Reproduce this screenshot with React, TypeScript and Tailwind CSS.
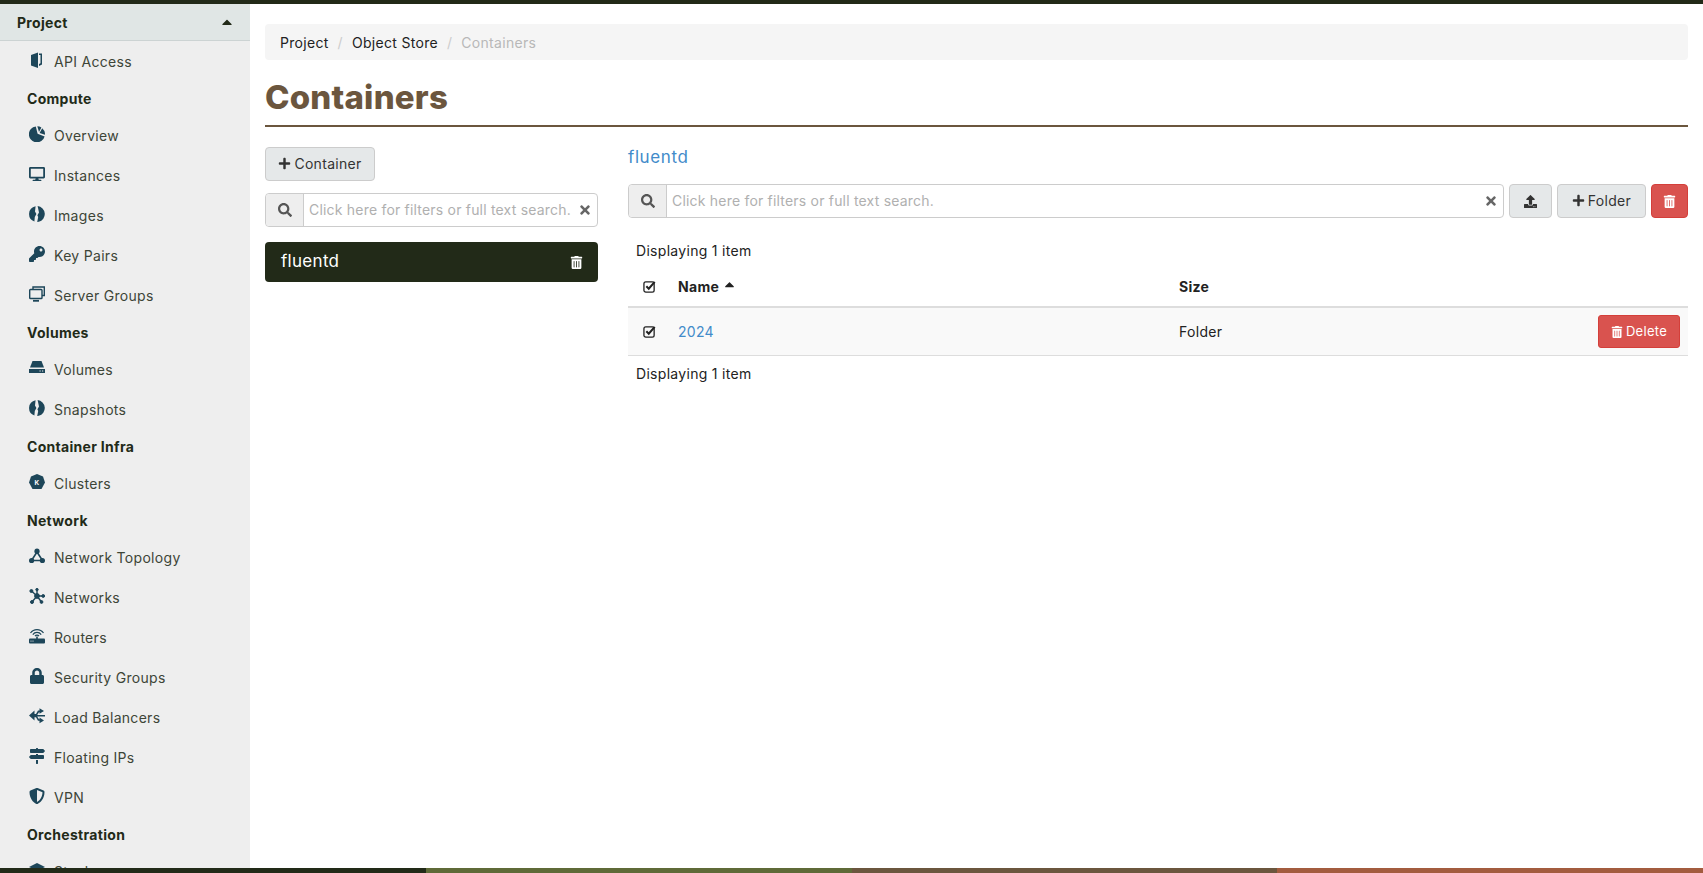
import type { ReactNode } from "react";
import {
  FaCaretUp,
  FaDesktop,
  FaKey,
  FaLock,
  FaMapSigns,
  FaPlus,
  FaSearch,
  FaShieldAlt,
  FaTimes,
  FaTrashAlt,
  FaUpload,
} from "react-icons/fa";

const ApiIcon = () => (
  <svg viewBox="0 0 16 16" className="w-4 h-4" fill="currentColor">
    <path d="M2 3 L9 0.5 V16 L2 13.5 Z" />
    <path d="M10 1.5 H13 V12.5 L10 14 V12 L11.5 11.2 V3 H10 Z" />
  </svg>
);

const PieIcon = () => (
  <svg viewBox="0 0 16 16" className="w-4 h-4" fill="currentColor">
    <path d="M6.8 0.4 L8.6 7.8 L15.6 10.4 A8 8 0 1 1 6.8 0.4 Z" />
    <path d="M8.3 0.2 A8 8 0 0 1 12.4 1.5 L10 6 Z" />
    <path d="M13.2 2.2 A8 8 0 0 1 16 8.8 L10.6 7 Z" />
  </svg>
);

const DiscIcon = () => (
  <svg viewBox="0 0 16 16" className="w-4 h-4" fill="currentColor">
    <path d="M6.6 0.2 L6 5.5 L7.4 8 L5.8 11 L5.4 15.6 A8 8 0 0 1 6.6 0.2 Z" />
    <path d="M8.6 0.1 A8 8 0 0 1 9.8 15.8 L8.2 15.9 L9.2 11 L8.4 9.2 L10 6.4 Z" />
  </svg>
);

const ServerGroupIcon = () => (
  <svg viewBox="0 0 16 16" className="w-4 h-4" fill="none" stroke="currentColor" strokeWidth="1.4">
    <path d="M4 3.5 V1 H15.3 V9.5 H13" />
    <rect x="0.7" y="3.5" width="12.3" height="9" rx="0.8" />
    <path d="M4 14.8 H10" strokeWidth="1.8" />
  </svg>
);

const VolumeIcon = () => (
  <svg viewBox="0 0 16 16" className="w-4 h-4" fill="currentColor">
    <path d="M3.5 1 H12.5 L15 7.5 H1 Z" />
    <path d="M0 9 H16 V13 H0 Z M10.5 10.4 V11.6 H11.7 V10.4 Z M13 10.4 V11.6 H14.2 V10.4 Z" fillRule="evenodd" />
  </svg>
);

const ClusterIcon = () => (
  <svg viewBox="0 0 16 16" className="w-4 h-4">
    <path d="M8 0 L14 2.5 L16 8.5 L12.5 15 L3.5 15 L0 8.5 L2 2.5 Z" fill="currentColor" />
    <text x="8" y="10.5" textAnchor="middle" fontSize="6.5" fontWeight="700" fill="#fff">K</text>
  </svg>
);

const TopologyIcon = () => (
  <svg viewBox="0 0 16 16" className="w-4 h-4" fill="currentColor">
    <path d="M8 4 L2.5 12.5 H13.5 Z" fill="none" stroke="currentColor" strokeWidth="1.6" />
    <circle cx="8" cy="3.2" r="2.6" />
    <circle cx="2.6" cy="12.5" r="2.6" />
    <circle cx="13.4" cy="12.5" r="2.6" />
  </svg>
);

const NetworksIcon = () => (
  <svg viewBox="0 0 16 16" className="w-4 h-4" fill="currentColor" stroke="currentColor">
    <path d="M8 8 L2.5 3 M8 8 L8 1.5 M8 8 L14 8 M8 8 L3 14 M8 8 L12.5 14" strokeWidth="1.4" />
    <circle cx="8" cy="8" r="2.4" />
    <circle cx="2.4" cy="3" r="1.5" />
    <circle cx="8" cy="1.6" r="1.2" />
    <circle cx="14.2" cy="8" r="1.4" />
    <circle cx="3" cy="14" r="1.5" />
    <circle cx="12.5" cy="14" r="1.4" />
  </svg>
);

const RouterIcon = () => (
  <svg viewBox="0 0 16 16" className="w-4 h-4" fill="none" stroke="currentColor">
    <path d="M1.5 5 A8 8 0 0 1 14.5 5" strokeWidth="1.2" />
    <path d="M3.8 6.6 A5.2 5.2 0 0 1 12.2 6.6" strokeWidth="1.2" />
    <path d="M6 8 A2.6 2.6 0 0 1 10 8" strokeWidth="1.2" />
    <path d="M8 8.5 V11" strokeWidth="1.6" />
    <rect x="0" y="10.5" width="16" height="5" rx="1" fill="currentColor" stroke="none" />
    <rect x="1.5" y="12.6" width="1" height="1" fill="#eee" stroke="none" />
    <rect x="3.5" y="12.6" width="1" height="1" fill="#eee" stroke="none" />
  </svg>
);

const BalancerIcon = () => (
  <svg viewBox="0 0 16 16" className="w-4 h-4" fill="currentColor">
    <path d="M0 7.5 L5.5 2.5 V6 H7 L9 2.6 H10.5 V0.2 L15 3 L10.5 5.8 V4.2 H10 L8.2 7 H16 V8.4 H8.2 L10 11.2 H10.5 V9.6 L15 12.4 L10.5 15.2 V12.8 H9 L7 9.2 H5.5 V12.5 Z" />
  </svg>
);

const StackIcon = () => (
  <svg viewBox="0 0 16 16" className="w-4 h-4" fill="currentColor">
    <path d="M8 1 L16 5 L8 9 L0 5 Z" />
    <path d="M0 8 L8 12 L16 8 V10 L8 14 L0 10 Z" />
  </svg>
);

const CheckBox = () => (
  <svg viewBox="0 0 14 14" className="w-[13px] h-[13px]" fill="none" stroke="currentColor">
    <rect x="1" y="2" width="11" height="11" rx="2" strokeWidth="1.4" />
    <path d="M3.6 6.8 L6.2 9.4 L12.6 2" strokeWidth="2.2" />
  </svg>
);

type Entry = { section: string } | { label: string; icon: ReactNode };

const sidebar: Entry[] = [
  { label: "API Access", icon: <ApiIcon /> },
  { section: "Compute" },
  { label: "Overview", icon: <PieIcon /> },
  { label: "Instances", icon: <FaDesktop /> },
  { label: "Images", icon: <DiscIcon /> },
  { label: "Key Pairs", icon: <FaKey /> },
  { label: "Server Groups", icon: <ServerGroupIcon /> },
  { section: "Volumes" },
  { label: "Volumes", icon: <VolumeIcon /> },
  { label: "Snapshots", icon: <DiscIcon /> },
  { section: "Container Infra" },
  { label: "Clusters", icon: <ClusterIcon /> },
  { section: "Network" },
  { label: "Network Topology", icon: <TopologyIcon /> },
  { label: "Networks", icon: <NetworksIcon /> },
  { label: "Routers", icon: <RouterIcon /> },
  { label: "Security Groups", icon: <FaLock /> },
  { label: "Load Balancers", icon: <BalancerIcon /> },
  { label: "Floating IPs", icon: <FaMapSigns /> },
  { label: "VPN", icon: <FaShieldAlt /> },
  { section: "Orchestration" },
  { label: "Stacks", icon: <StackIcon /> },
];

function SearchBox() {
  return (
    <div className="flex h-[34px] flex-1 min-w-0 rounded border border-[#cccccc] bg-white">
      <span className="w-[38px] shrink-0 flex items-center justify-center bg-[#eeeeee] border-r border-[#cccccc] rounded-l text-[#555555] text-[14px]">
        <FaSearch />
      </span>
      <span className="flex-1 min-w-0 pl-[5px] whitespace-nowrap leading-[32px] text-[14px] tracking-[0.2px] text-[#b0b0b0]">
        Click here for filters or full text search.
      </span>
      <span className="w-[24px] shrink-0 flex items-center justify-center text-[#666666] text-[14px]">
        <FaTimes />
      </span>
    </div>
  );
}

export default function App() {
  return (
    <div className="relative h-screen overflow-hidden bg-white font-['Inter','Liberation_Sans',sans-serif] text-[14px] tracking-[0.3px] text-[#222a18]">
      <div className="h-1 bg-[#222a18]" />
      <div className="flex h-[864px]">
        {/* sidebar */}
        <aside className="w-[250px] shrink-0 bg-[#eeeeee] overflow-hidden">
          <div className="h-[37px] flex items-center justify-between pl-[17px] pr-[15px] bg-[#e0e6e5] border-b border-[#ccd3d3] font-bold">
            <span>Project</span>
            <FaCaretUp className="text-[16px]" />
          </div>
          {sidebar.map((e) =>
            "section" in e ? (
              <div key={e.section} className="h-[34px] flex items-center pl-[27px] font-bold">
                {e.section}
              </div>
            ) : (
              <div key={e.label} className="h-10 flex items-center pl-[29px] text-[#3d4537]">
                <span className="w-[25px] shrink-0 text-[#1d4659] text-[16px] -mt-[3px]">{e.icon}</span>
                {e.label}
              </div>
            ),
          )}
        </aside>

        {/* main */}
        <main className="flex-1 min-w-0 pt-5 pl-[15px] pr-[15px]">
          <div className="h-9 flex items-center px-[15px] bg-[#f5f5f5] rounded text-[#222222]">
            <span>Project</span>
            <span className="px-[9px] text-[#cccccc]">/</span>
            <span>Object Store</span>
            <span className="px-[9px] text-[#cccccc]">/</span>
            <span className="text-[#b8b8b8]">Containers</span>
          </div>
          <h1 className="mt-[15px] h-[52px] text-[33px] tracking-[0.2px] leading-[45px] font-extrabold text-[#6b563e] border-b-2 border-[#6b563e]">
            Containers
          </h1>

          <div className="flex gap-[30px] mt-5">
            <div className="w-[333px] shrink-0">
              <button className="h-[34px] w-[110px] flex items-center justify-center gap-[3px] pb-px rounded border border-[#cccccc] bg-[#e5e8e9] text-[#333333]">
                <FaPlus className="text-[13px]" />
                Container
              </button>
              <div className="flex mt-3">
                <SearchBox />
              </div>
              <div className="mt-[15px] h-10 flex items-center justify-between pl-4 pr-[15px] rounded bg-[#222a18] text-white text-[17px]">
                fluentd
                <FaTrashAlt className="text-[13px]" />
              </div>
            </div>

            <div className="flex-1 min-w-0">
              <div className="h-[20px] text-[#428bca] text-[17px] tracking-[0.6px] leading-5">fluentd</div>
              <div className="flex gap-[5px] mt-[17px]">
                <SearchBox />
                <button className="h-[34px] w-[43px] flex items-center justify-center rounded border border-[#cccccc] bg-[#e5e8e9] text-[#333333] text-[13px]">
                  <FaUpload />
                </button>
                <button className="h-[34px] w-[89px] flex items-center justify-center gap-[3px] pb-px rounded border border-[#cccccc] bg-[#e5e8e9] text-[#333333]">
                  <FaPlus className="text-[13px]" />
                  Folder
                </button>
                <button className="h-[34px] w-[37px] flex items-center justify-center rounded border border-[#d43f3a] bg-[#d9534f] text-white text-[13px]">
                  <FaTrashAlt />
                </button>
              </div>

              <div className="h-[40px] mt-[12px] pl-2 flex items-center text-[#222222]">Displaying 1 item</div>
              <div className="h-[38px] pb-[3px] flex items-center border-b-2 border-[#dddddd] font-bold text-[#222222]">
                <span className="w-[50px] pl-[15px] text-[#222222]">
                  <CheckBox />
                </span>
                <span className="w-[501px] flex items-center gap-[3px]">
                  Name <FaCaretUp className="text-[15px] -mt-1" />
                </span>
                <span>Size</span>
              </div>
              <div className="h-[48px] flex items-center bg-[#f9f9f9] border-b border-[#dddddd] text-[#222222]">
                <span className="w-[50px] pl-[15px] text-[#222222]">
                  <CheckBox />
                </span>
                <span className="w-[501px] text-[#428bca]">2024</span>
                <span className="flex-1">Folder</span>
                <button className="mr-2 h-[33px] w-[82px] flex items-center justify-center gap-[3px] rounded-[3px] border border-[#d43f3a] bg-[#d9534f] text-white text-[13px]">
                  <FaTrashAlt className="text-[12px]" />
                  Delete
                </button>
              </div>
              <div className="h-[34px] pl-2 flex items-center text-[#222222]">Displaying 1 item</div>
            </div>
          </div>
        </main>
      </div>

      {/* bottom colour bar */}
      <div className="absolute bottom-0 inset-x-0 h-[5px] flex">
        <div className="flex-1 bg-[#222a18]" />
        <div className="flex-1 bg-[#5f6a38]" />
        <div className="flex-1 bg-[#6b563e]" />
        <div className="flex-1 bg-[#a35c3f]" />
      </div>
    </div>
  );
}
